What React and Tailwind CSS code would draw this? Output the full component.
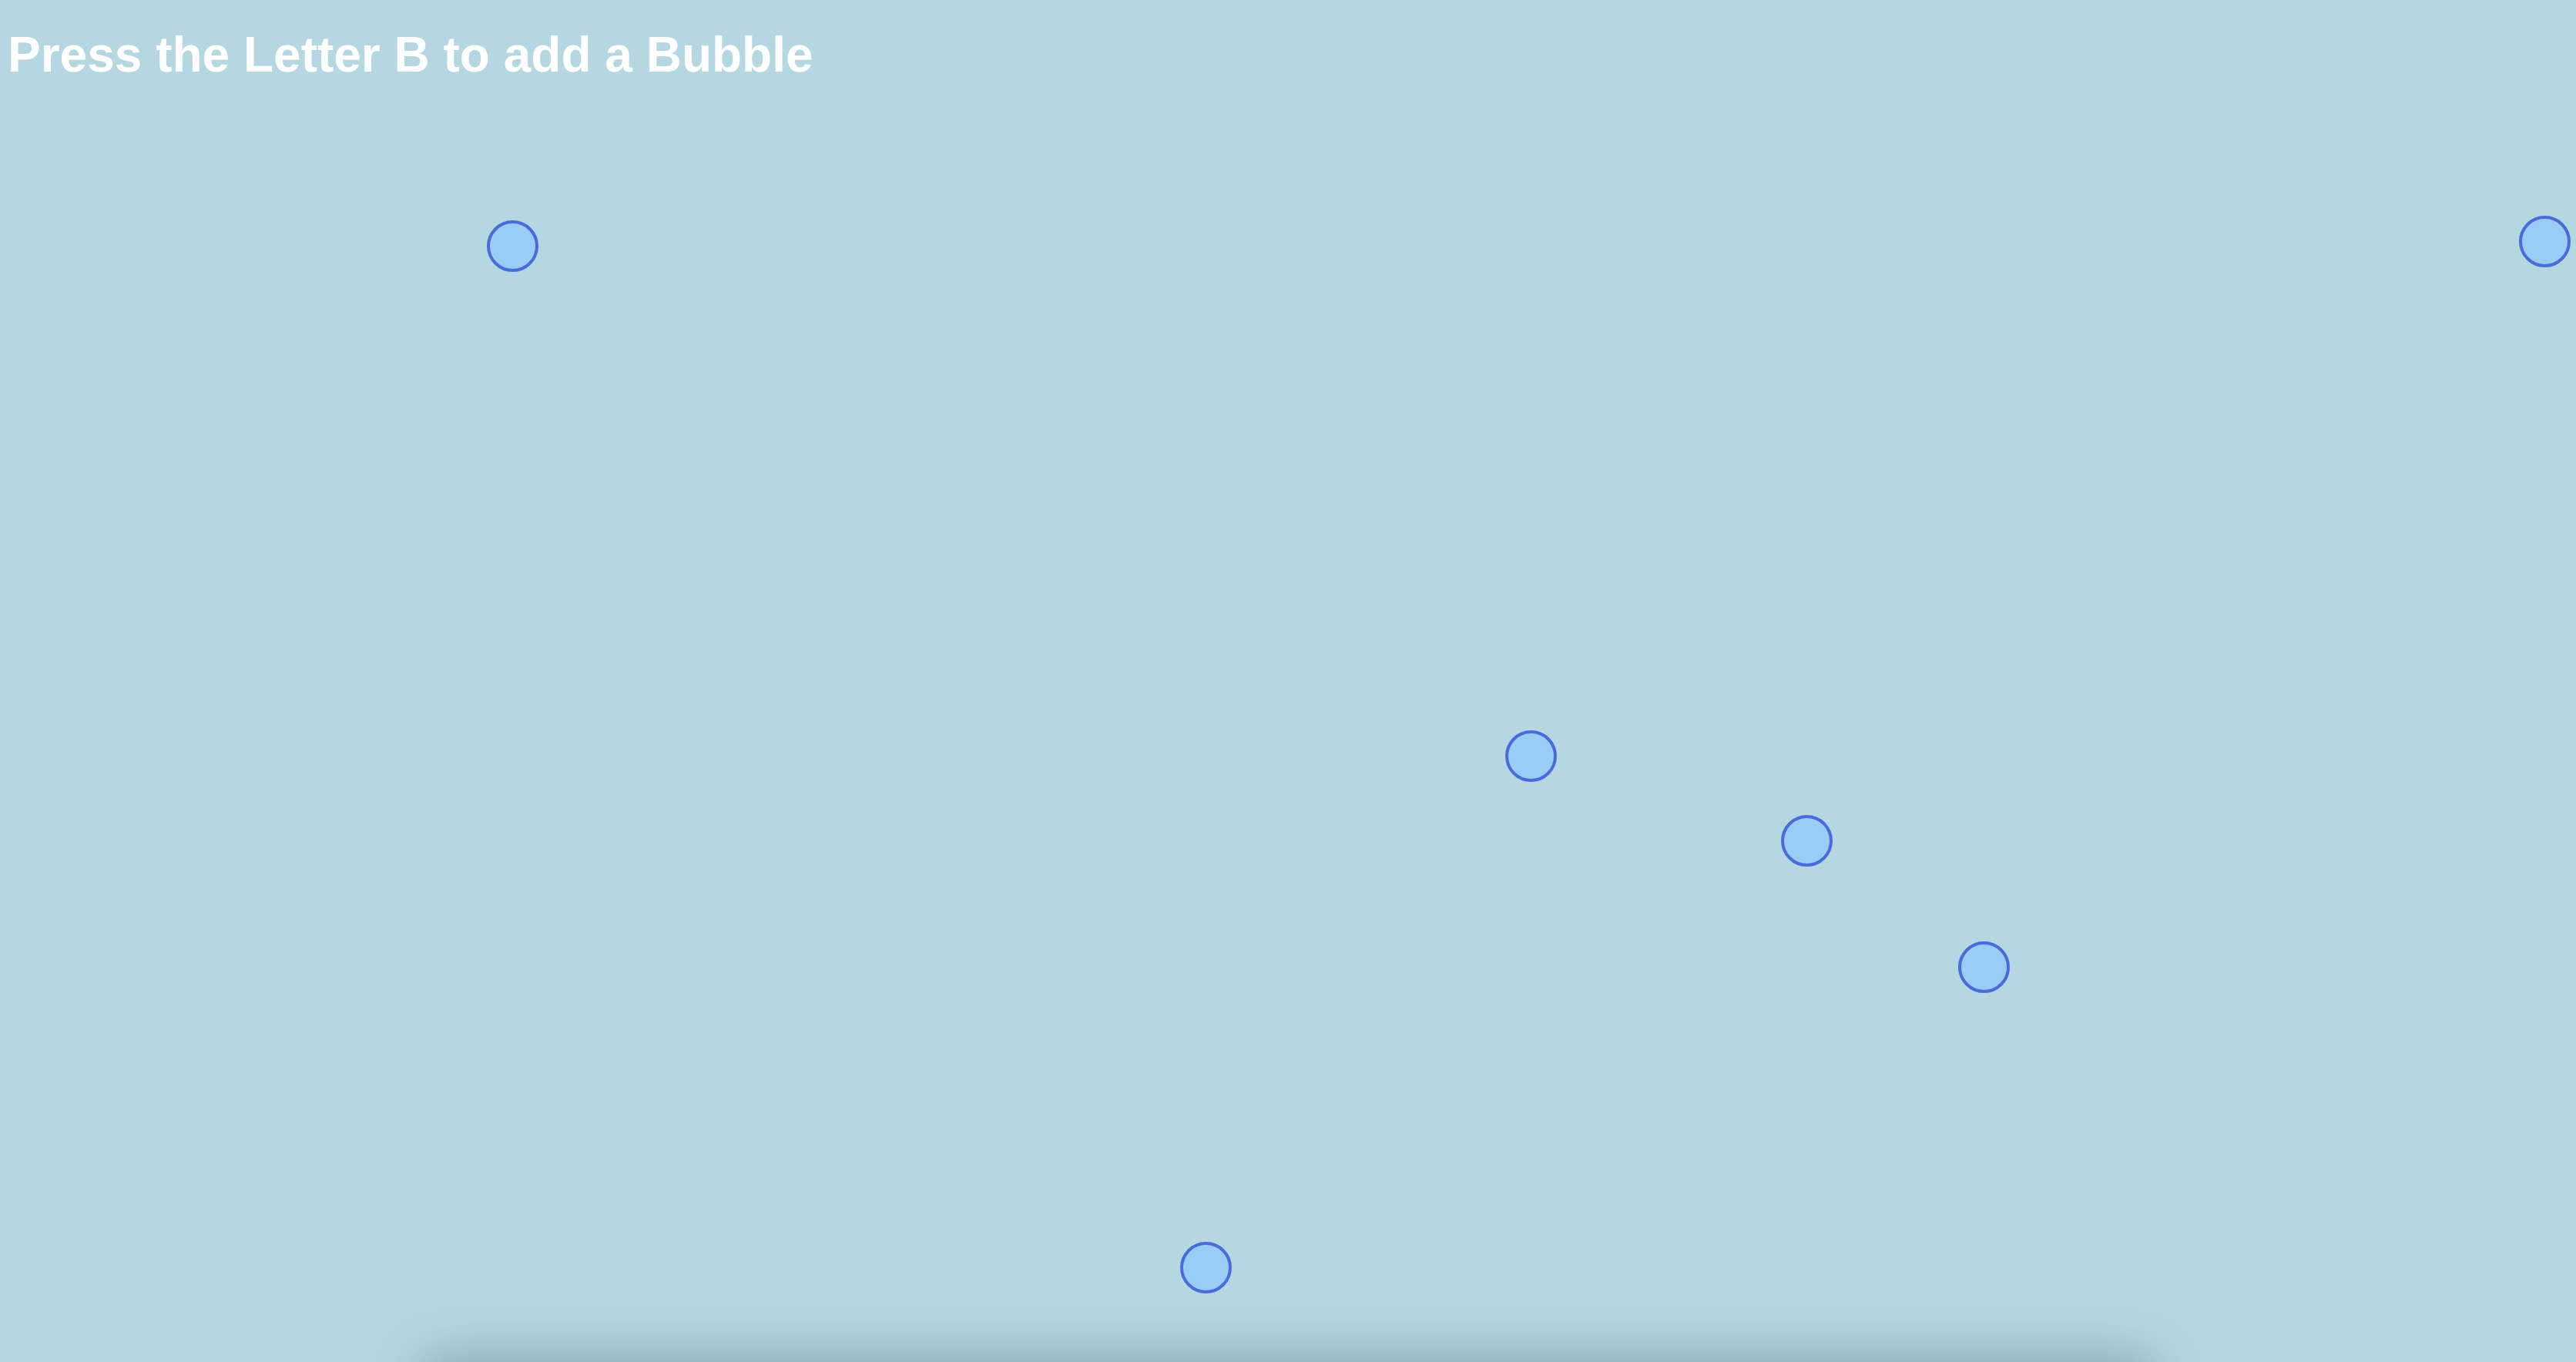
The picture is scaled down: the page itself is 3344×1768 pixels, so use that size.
export default function App() {
  const bubbles = [
    { x: 632, y: 286 },
    { x: 3270, y: 280 },
    { x: 1954, y: 948 },
    { x: 2312, y: 1058 },
    { x: 2542, y: 1222 },
    { x: 1532, y: 1612 },
  ];
  return (
    <div className="relative w-[3344px] h-[1768px] overflow-hidden bg-[#b4d7e2]" style={{ fontFamily: '"Liberation Sans", Arial, sans-serif' }}>
      <h1 className="pt-[39px] pl-[10px] text-[64px] leading-none font-bold text-white">Press the Letter B to add a Bubble</h1>
      {bubbles.map((b, i) => (
        <div
          key={i}
          className="absolute w-[67px] h-[67px] rounded-full border-[4px] border-[#4a6cdb] bg-[#9acdf6]"
          style={{ left: b.x, top: b.y }}
        />
      ))}
      <div className="absolute left-[550px] top-[1776px] w-[2244px] h-[200px] bg-[#b4d7e2] shadow-[0_-8px_70px_rgba(0,0,0,0.28)]" />
    </div>
  );
}
